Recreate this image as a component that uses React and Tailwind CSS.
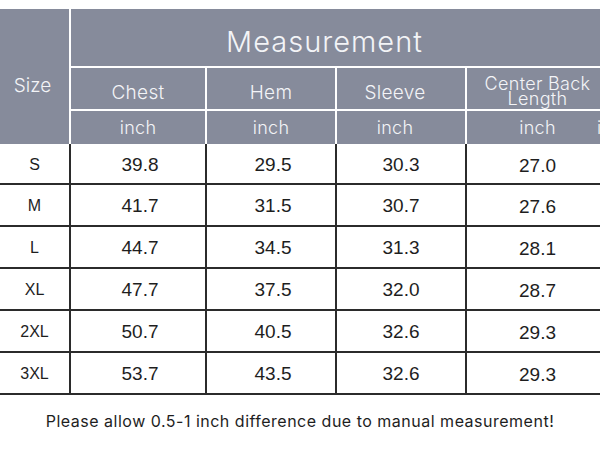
import React from "react";

const rows = [
  ["S", "39.8", "29.5", "30.3", "27.0"],
  ["M", "41.7", "31.5", "30.7", "27.6"],
  ["L", "44.7", "34.5", "31.3", "28.1"],
  ["XL", "47.7", "37.5", "32.0", "28.7"],
  ["2XL", "50.7", "40.5", "32.6", "29.3"],
  ["3XL", "53.7", "43.5", "32.6", "29.3"],
];

const cols = "grid grid-cols-[69px_136px_130px_130px_127px_1fr]";

export default function App() {
  return (
    <div className="w-[600px] h-[450px] overflow-hidden bg-white pt-[9px] font-['Inter',sans-serif]">
      {/* header */}
      <div className={`${cols} grid-rows-[59px_43px_33px] bg-[#868b9b] text-[#f3f4f7]`}>
        <div className="row-span-3 flex items-center justify-center pt-[20px] pr-1 text-[19px] font-light">
          Size
        </div>
        <div className="col-span-5 border-l-2 border-b-2 border-white flex items-center justify-center pt-[8px] pr-[22px] text-[29px] font-light tracking-[1px]">
          Measurement
        </div>
        <div className="border-l-2 border-b-2 border-white flex items-end justify-center pb-[2px] text-[19px] font-light tracking-[0.3px]">
          Chest
        </div>
        <div className="border-l-2 border-b-2 border-white flex items-end justify-center pb-[2px] text-[19px] font-light tracking-[0.3px]">
          Hem
        </div>
        <div className="border-l-2 border-b-2 border-white flex items-end justify-center pb-[2px] pr-3 text-[19px] font-light tracking-[0.3px]">
          Sleeve
        </div>
        <div className="border-l-2 border-b-2 border-white flex flex-col items-center justify-center pl-4 pt-1 text-[18px] font-light leading-[15px] tracking-[0.3px] whitespace-nowrap">
          <span>Center Back</span>
          <span>Length</span>
        </div>
        <div className="border-b-2 border-white" />
        <div className="border-l-2 border-white flex items-center justify-center text-[18px] font-light tracking-[0.3px]">
          inch
        </div>
        <div className="border-l-2 border-white flex items-center justify-center text-[18px] font-light tracking-[0.3px]">
          inch
        </div>
        <div className="border-l-2 border-white flex items-center justify-center pr-3 text-[18px] font-light tracking-[0.3px]">
          inch
        </div>
        <div className="border-l-2 border-white flex items-center justify-center pl-4 text-[18px] font-light tracking-[0.3px]">
          inch
        </div>
        <div className="flex items-center pl-[5px] text-[18px] font-light overflow-hidden">
          inch
        </div>
      </div>

      {/* body */}
      {rows.map((r, i) => (
        <div
          key={r[0]}
          className={`${cols} ${i === 0 ? "h-[41px]" : "h-[42px]"} border-b-2 border-[#2b2b2b] text-[#1e1e1e] font-['Liberation_Sans',sans-serif]`}
        >
          <div className="flex items-center justify-center text-[16px] pt-[2px]">
            {r[0]}
          </div>
          <div className="border-l-2 border-[#2b2b2b] flex items-center justify-center pl-1 pt-[3px] text-[19px]">
            {r[1]}
          </div>
          <div className="border-l-2 border-[#2b2b2b] flex items-center justify-center pl-1 pt-[3px] text-[19px]">
            {r[2]}
          </div>
          <div className="border-l-2 border-[#2b2b2b] flex items-center justify-center pt-[3px] text-[19px]">
            {r[3]}
          </div>
          <div className="border-l-2 border-[#2b2b2b] flex items-center justify-center pl-4 pt-[5px] text-[19px]">
            {r[4]}
          </div>
          <div />
        </div>
      ))}

      <p className="mt-[14px] text-center text-[16px] text-[#1e1e1e] tracking-[0.5px]">
        Please allow 0.5-1 inch difference due to manual measurement!
      </p>
    </div>
  );
}
